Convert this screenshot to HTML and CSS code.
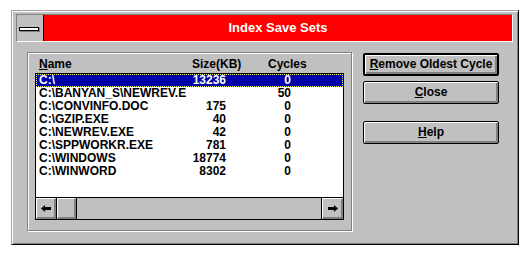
FILE: index.html
```html
<!DOCTYPE html>
<html>
<head>
<meta charset="utf-8">
<link rel="stylesheet" href="styles.css">
</head>
<body>
<div class="window">
  <div class="caption">
    <div class="sysmenu"><span class="sysbar"></span></div>
    <div class="title">Index Save Sets</div>
  </div>
  <div class="client">
    <div class="group">
      <div class="header">
        <span class="c-name"><u>N</u>ame</span>
        <span class="c-size">Size(KB)</span>
        <span class="c-cyc">Cycles</span>
      </div>
      <div class="listbox">
        <div class="rows">
          <div class="row selected"><span class="name">C:\</span><span class="size">13236</span><span class="cyc">0</span></div>
          <div class="row"><span class="name">C:\BANYAN_S\NEWREV.E</span><span class="size"></span><span class="cyc">50</span></div>
          <div class="row"><span class="name">C:\CONVINFO.DOC</span><span class="size">175</span><span class="cyc">0</span></div>
          <div class="row"><span class="name">C:\GZIP.EXE</span><span class="size">40</span><span class="cyc">0</span></div>
          <div class="row"><span class="name">C:\NEWREV.EXE</span><span class="size">42</span><span class="cyc">0</span></div>
          <div class="row"><span class="name">C:\SPPWORKR.EXE</span><span class="size">781</span><span class="cyc">0</span></div>
          <div class="row"><span class="name">C:\WINDOWS</span><span class="size">18774</span><span class="cyc">0</span></div>
          <div class="row"><span class="name">C:\WINWORD</span><span class="size">8302</span><span class="cyc">0</span></div>
        </div>
        <div class="hscroll">
          <div class="sbtn left"><svg width="10" height="7" viewBox="0 0 10 7"><polygon points="0,3.5 4,0 4,7" fill="#000"/><rect x="4" y="2" width="6" height="3" fill="#000"/></svg></div>
          <div class="thumb"></div>
          <div class="track"></div>
          <div class="sbtn right"><svg width="10" height="7" viewBox="0 0 10 7"><polygon points="10,3.5 6,0 6,7" fill="#000"/><rect x="0" y="2" width="6" height="3" fill="#000"/></svg></div>
        </div>
      </div>
    </div>
    <div class="buttons">
      <div class="btn default"><span><u>R</u>emove Oldest Cycle</span></div>
      <div class="btn"><span><u>C</u>lose</span></div>
      <div class="btn help"><span><u>H</u>elp</span></div>
    </div>
  </div>
</div>
</body>
</html>
```
FILE: styles.css
```css
html, body {
  margin: 0;
  background: #fff;
}
body {
  padding: 10px 0 0 11px;
  font-family: "Liberation Sans", Arial, sans-serif;
  font-weight: bold;
  font-size: 12px;
  color: #000;
}
.window {
  box-sizing: border-box;
  width: 508px;
  height: 235px;
  background: #c0c0c0;
  border-top: 1px solid #a0a0a0;
  border-left: 1px solid #a0a0a0;
  border-right: 1px solid #000;
  border-bottom: 1px solid #000;
  box-shadow: inset 1px 1px 0 #fff, inset -1px -1px 0 #808080;
  padding: 3px 4px 0 4px;
  display: flex;
  flex-direction: column;
}
.caption {
  display: flex;
  height: 28px;
  box-sizing: border-box;
  border-top: 1px solid #808080;
  border-left: 1px solid #808080;
  border-right: 1px solid #fff;
  border-bottom: 1px solid #fff;
  width: 497px;
}
.sysmenu {
  width: 26px;
  border-right: 1px solid #000;
  background: #c0c0c0;
  display: flex;
  align-items: center;
  justify-content: center;
}
.sysbar {
  display: block;
  width: 18px;
  height: 2px;
  background: #fff;
  border: 1px solid #000;
  box-shadow: 1px 1px 0 #808080;
  margin-left: -2px;
  margin-top: 1px;
}
.title {
  flex: 1;
  background: #ff0000;
  color: #fff;
  font-size: 13px;
  line-height: 26px;
  text-align: center;
}
.client {
  display: flex;
  padding: 10px 0 0 11px;
}
.group {
  box-sizing: border-box;
  width: 325px;
  height: 179px;
  border: 1px solid #808080;
  box-shadow: 1px 1px 0 #fff, inset 1px 1px 0 #fff;
  padding: 4px 0 0 7px;
}
.header {
  display: grid;
  grid-template-columns: 153px 76px 70px;
  line-height: 14px;
  height: 16px;
  padding-left: 4px;
}
.listbox {
  box-sizing: border-box;
  width: 309px;
  height: 147px;
  border: 1px solid #000;
  background: #fff;
  display: flex;
  flex-direction: column;
}
.rows {
  height: 123px;
}
.row {
  display: grid;
  grid-template-columns: 187px 3px 62px;
  height: 13px;
  line-height: 13px;
  padding-left: 3px;
  white-space: nowrap;
}
.row .name { grid-column: 1; grid-row: 1; }
.row .size { text-align: right; grid-column: 1; grid-row: 1; }
.row .cyc { grid-column: 3; grid-row: 1; text-align: right; }
.row.selected {
  background: #0000a8;
  color: #fff;
  outline: 1px dotted #ffff54;
  outline-offset: -1px;
}
.hscroll {
  display: flex;
  height: 22px;
  box-sizing: border-box;
  border-top: 1px solid #000;
  background: #c0c0c0;
}
.sbtn, .thumb {
  box-sizing: border-box;
  height: 21px;
  background: #c0c0c0;
  border-top: 1px solid #fff;
  border-left: 1px solid #fff;
  border-right: 1px solid #808080;
  border-bottom: 1px solid #808080;
  box-shadow: inset -1px -1px 0 #808080;
  display: flex;
  align-items: center;
  justify-content: center;
}
.sbtn.left { width: 20px; }
.thumb {
  width: 19px;
  margin-left: 1px;
  box-shadow: inset -1px -1px 0 #808080, -1px 0 0 #000;
}
.track { flex: 1; border-left: 1px solid #000; border-right: 1px solid #000; }
.sbtn.right { width: 21px; }
.buttons {
  margin-left: 11px;
  padding-top: 1px;
  display: flex;
  flex-direction: column;
  width: 136px;
}
.btn {
  box-sizing: border-box;
  height: 23px;
  border: 1px solid #000;
  border-radius: 2px;
  background: #c0c0c0;
  box-shadow: inset 1px 1px 0 #fff, inset -2px -2px 0 #808080;
  display: flex;
  align-items: center;
  justify-content: center;
  line-height: 14px;
  margin-bottom: 5px;
}
.btn.default {
  border-width: 2px;
}
.btn.help {
  margin-top: 12px;
}
.btn span { padding-bottom: 1px; }
```
